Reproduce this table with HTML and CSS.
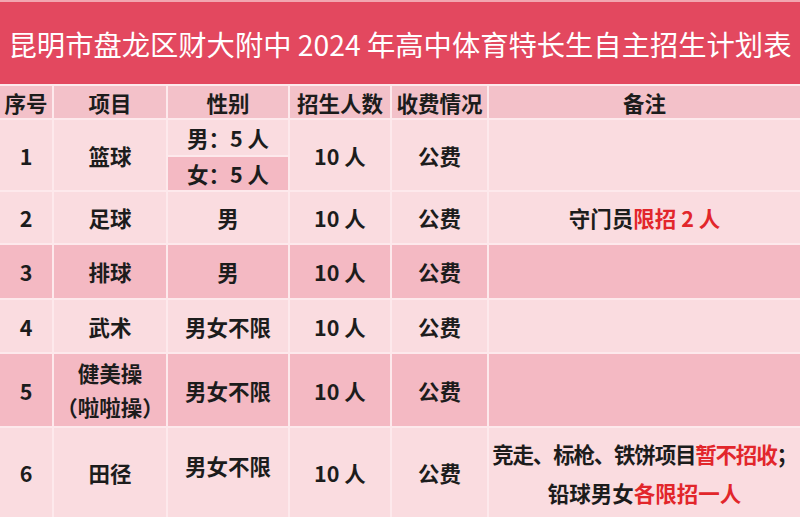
FILE: index.html
```html
<!DOCTYPE html>
<html lang="zh-CN">
<head>
<meta charset="utf-8">
<title>计划表</title>
<link rel="stylesheet" href="styles.css">
</head>
<body>
<div class="page">
  <div class="title">昆明市盘龙区财大附中 2024 年高中体育特长生自主招生计划表</div>
  <div class="table">
    <div class="c hd">序号</div>
    <div class="c hd">项目</div>
    <div class="c hd">性别</div>
    <div class="c hd">招生人数</div>
    <div class="c hd">收费情况</div>
    <div class="c hd">备注</div>

    <div class="c lt span2">1</div>
    <div class="c lt span2">篮球</div>
    <div class="c lt">男：5 人</div>
    <div class="c lt span2">10 人</div>
    <div class="c lt span2">公费</div>
    <div class="c lt span2"></div>
    <div class="c dk">女：5 人</div>

    <div class="c lt">2</div>
    <div class="c lt">足球</div>
    <div class="c lt">男</div>
    <div class="c lt">10 人</div>
    <div class="c lt">公费</div>
    <div class="c lt"><div class="line">守门员<span class="red">限招 2 人</span></div></div>

    <div class="c dk">3</div>
    <div class="c dk">排球</div>
    <div class="c dk">男</div>
    <div class="c dk">10 人</div>
    <div class="c dk">公费</div>
    <div class="c dk"></div>

    <div class="c lt">4</div>
    <div class="c lt">武术</div>
    <div class="c lt">男女不限</div>
    <div class="c lt">10 人</div>
    <div class="c lt">公费</div>
    <div class="c lt"></div>

    <div class="c dk">5</div>
    <div class="c dk two">健美操<br>（啦啦操）</div>
    <div class="c dk">男女不限</div>
    <div class="c dk">10 人</div>
    <div class="c dk">公费</div>
    <div class="c dk"></div>

    <div class="c lt">6</div>
    <div class="c lt">田径</div>
    <div class="c lt up">男女不限</div>
    <div class="c lt">10 人</div>
    <div class="c lt">公费</div>
    <div class="c lt remark">
      <div class="line tight">竞走、标枪、铁饼项目<span class="red">暂不招收</span>；</div>
      <div class="line">铅球男女<span class="red">各限招一人</span></div>
    </div>
  </div>
</div>
</body>
</html>
```

FILE: styles.css
```css
html, body {
  margin: 0;
  padding: 0;
  background: #fde9ec;
  overflow: hidden;
}

.page {
  width: 800px;
  height: 517px;
  overflow: hidden;
  font-family: "Noto Sans CJK SC", "Noto Sans", sans-serif;
  background: #fde9ec;
}

.title {
  height: 82px;
  border-top: 2px solid #f2a6b1;
  background: #e3485f;
  color: #ffffff;
  font-size: 28.3px;
  font-weight: 400;
  display: flex;
  align-items: center;
  justify-content: center;
  white-space: nowrap;
  margin-bottom: 2px;
}

.table {
  display: grid;
  grid-template-columns: 52px 112px 120px 100px 95px 1fr;
  grid-template-rows: 32px 35px 33px 51px 53px 52px 72px 89px;
  gap: 2px;
  background: #fde9ec;
}

.c {
  display: flex;
  flex-direction: column;
  align-items: center;
  justify-content: center;
  text-align: center;
  font-size: 21.5px;
  font-weight: 700;
  color: #1c1c1c;
  white-space: nowrap;
}

.hd {
  background: #f3c1c9;
}

.lt {
  background: #fadce0;
}

.dk {
  background: #f4b9c3;
}

.span2 {
  grid-row: span 2;
}

.two {
  line-height: 34px;
}

.up {
  padding-bottom: 14px;
}

.remark {
  line-height: 39px;
}

.line.tight {
  letter-spacing: -1.2px;
}

.red {
  color: #e2262b;
}
```
